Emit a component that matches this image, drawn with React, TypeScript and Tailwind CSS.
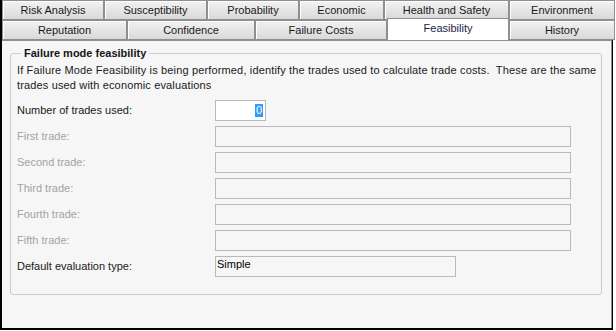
import React from 'react'

const row1 = [
  { label: 'Risk Analysis', w: 102 },
  { label: 'Susceptibility', w: 103 },
  { label: 'Probability', w: 92 },
  { label: 'Economic', w: 85 },
  { label: 'Health and Safety', w: 125 },
  { label: 'Environment', w: 106 },
]

const row2 = [
  { label: 'Reputation', w: 125 },
  { label: 'Confidence', w: 128 },
  { label: 'Failure Costs', w: 132 },
  { label: 'Feasibility', w: 122, active: true },
  { label: 'History', w: 106 },
]

const trades = ['First trade:', 'Second trade:', 'Third trade:', 'Fourth trade:', 'Fifth trade:']

const Tab = ({ label, w, active }: { label: string; w: number; active?: boolean }) => {
  if (active) {
    return (
      <div
        className="relative z-10 -mt-[2px] mb-[-1px] flex h-[22px] shrink-0 items-start justify-center border border-b-0 border-[#8e8f8f] bg-white pt-[3px] text-[#1b1b4a]"
        style={{ width: w }}
      >
        {label}
      </div>
    )
  }
  return (
    <div
      className="flex h-[20px] shrink-0 items-center justify-center border border-[#8e8f8f] bg-gradient-to-b from-[#f2f2f2] to-[#d9d9d9] text-[#1a1a1a] shadow-[inset_1px_1px_0_#ffffff]"
      style={{ width: w }}
    >
      {label}
    </div>
  )
}

const App = () => {
  return (
    <div className="h-[331px] w-[616px] bg-white font-['Liberation_Sans',Arial,sans-serif] text-[11px] leading-[13px]">
      <div className="flex h-[330px] w-[613px] flex-col border-b-[2px] border-l-[2px] border-r-[1px] border-black">
        <div className="flex">
          {row1.map((t) => (
            <Tab key={t.label} {...t} />
          ))}
        </div>
        <div className="flex">
          {row2.map((t) => (
            <Tab key={t.label} {...t} />
          ))}
        </div>
        <div className="flex-1 border-t border-r border-[#8e8f8f] bg-[#f6f6f6] pt-[6px] pl-[8px] pr-[9px]">
          <fieldset className="h-[248px] rounded-[3px] border border-[#c9cdd1] pl-[6px] pr-[2px]">
            <legend className="ml-[4px] px-[3px] font-bold text-[#151515]">Failure mode feasibility</legend>
            <p className="mt-[3px] leading-[15px] tracking-[0.15px] text-[#1a1a1a]">
              If Failure Mode Feasibility is being performed, identify the trades used to calculate trade costs.&nbsp; These are the same trades used with economic evaluations
            </p>
            <div className="mt-[7px] flex flex-col gap-[5px] pr-[28px]">
              <div className="flex items-center">
                <span className="w-[198px] text-[#1a1a1a]">Number of trades used:</span>
                <div className="flex h-[21px] w-[51px] items-center justify-end border border-[#b9b9b9] bg-white pr-[2px]">
                  <span className="bg-[#3399ff] px-[1px] text-white">0</span>
                </div>
              </div>
              {trades.map((t) => (
                <div key={t} className="flex items-center">
                  <span className="w-[198px] text-[#a3a3a3]">{t}</span>
                  <div className="h-[21px] flex-1 border border-[#b9b9b9] bg-[#f6f6f6]" />
                </div>
              ))}
              <div className="flex items-center">
                <span className="w-[198px] text-[#1a1a1a]">Default evaluation type:</span>
                <div className="h-[21px] w-[241px] border border-[#b9b9b9] bg-[#f6f6f6] pl-[1px] pt-[1px] text-[#000]">
                  Simple
                </div>
              </div>
            </div>
          </fieldset>
        </div>
      </div>
    </div>
  )
}

export default App
